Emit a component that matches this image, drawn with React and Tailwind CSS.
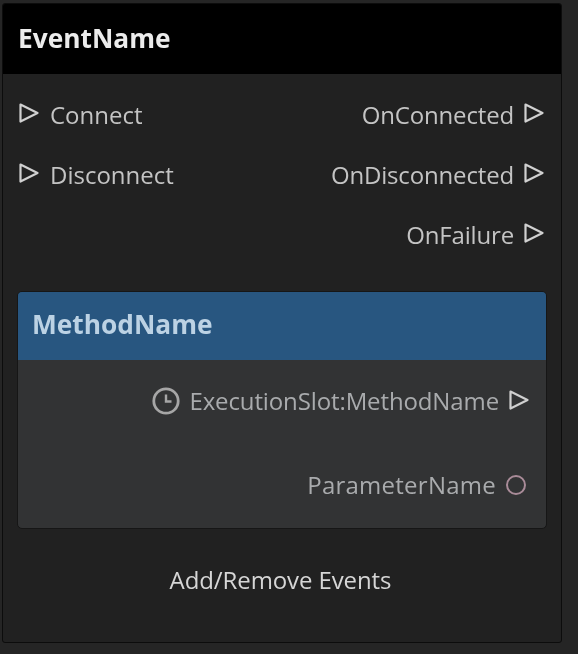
const font = { fontFamily: '"Open Sans", sans-serif' };

function Exec({ className = "mb-[4px]" }) {
  return (
    <svg width="20" height="20" viewBox="0 0 20 20" className={`shrink-0 ${className}`}>
      <path d="M1.5 1.5 L18.5 10 L1.5 18.5 Z" fill="none" stroke="#d0d0d0" strokeWidth="2.2" strokeLinejoin="round" />
    </svg>
  );
}

function Clock() {
  return (
    <svg width="28" height="28" viewBox="0 0 28 28" className="shrink-0">
      <circle cx="14" cy="14" r="12.2" fill="none" stroke="#a6a6a6" strokeWidth="2.8" />
      <path d="M14 7.5 V14.5 H19.5" fill="none" stroke="#a6a6a6" strokeWidth="2.4" />
    </svg>
  );
}

function Row({ left, right }) {
  return (
    <div className="flex h-[60px] items-center justify-between">
      <div className="flex items-center gap-[11px]">
        {left && <Exec />}
        {left && <span>{left}</span>}
      </div>
      <div className="flex items-center gap-[10px]">
        {right && <span className="tracking-[-0.16px]">{right}</span>}
        {right && <Exec />}
      </div>
    </div>
  );
}

export default function App() {
  return (
    <div className="h-[654px] w-[578px] overflow-hidden bg-[#252525] pl-[2px] pt-[3px]" style={font}>
      <div className="h-[640px] w-[560px] overflow-hidden rounded-[3px] border border-[#0c0c0c] bg-[#212121] text-[24px] text-[#c4c4c4] blur-[0.6px]">
        <div className="flex h-[70px] items-center bg-black pl-[15px] text-[26.3px] font-bold text-[#ececec]">EventName</div>
        <div className="pl-[16px] pr-[17px] pt-[11px]">
          <Row left="Connect" right="OnConnected" />
          <Row left="Disconnect" right="OnDisconnected" />
          <Row right="OnFailure" />
        </div>
        <div className="ml-[14px] mt-[26px] w-[530px] overflow-hidden rounded-[5px] border border-[#161616] bg-[#323334] text-[#a9abad]">
          <div className="flex h-[68px] items-center bg-[#285680] pb-[2px] pl-[14px] text-[26.3px] font-bold text-[#bcd2e4]">MethodName</div>
          <div className="flex h-[168px] flex-col items-end pr-[17px]">
            <div className="mt-[24px] flex h-[34px] items-center">
              <Clock />
              <span className="ml-[9px] tracking-[-0.12px]">ExecutionSlot:MethodName</span>
              <Exec className="mb-[2px] ml-[10px]" />
            </div>
            <div className="mt-[50px] flex h-[34px] items-center">
              <span className="tracking-[0.25px]">ParameterName</span>
              <span className="ml-[10px] mr-[3px] h-[20px] w-[20px] rounded-full border-[2px] border-[#a98b98]" />
            </div>
          </div>
        </div>
        <div className="mt-[33px] pr-[3px] text-center tracking-[-0.1px] text-[#d6d6d6]">Add/Remove Events</div>
      </div>
    </div>
  );
}
